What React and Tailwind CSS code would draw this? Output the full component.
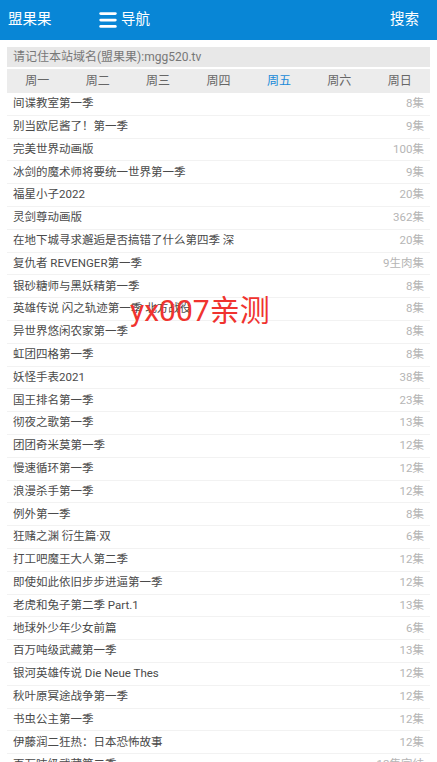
import { Menu } from 'lucide-react';

const days = ['周一', '周二', '周三', '周四', '周五', '周六', '周日'];

const shows = [
  ['间谍教室第一季', '8集'],
  ['别当欧尼酱了！第一季', '9集'],
  ['完美世界动画版', '100集'],
  ['冰剑的魔术师将要统一世界第一季', '9集'],
  ['福星小子2022', '20集'],
  ['灵剑尊动画版', '362集'],
  ['在地下城寻求邂逅是否搞错了什么第四季 深', '20集'],
  ['复仇者 REVENGER第一季', '9生肉集'],
  ['银砂糖师与黑妖精第一季', '8集'],
  ['英雄传说 闪之轨迹第一季 北方战役', '8集'],
  ['异世界悠闲农家第一季', '8集'],
  ['虹团四格第一季', '8集'],
  ['妖怪手表2021', '38集'],
  ['国王排名第一季', '23集'],
  ['彻夜之歌第一季', '13集'],
  ['团团奇米莫第一季', '12集'],
  ['慢速循环第一季', '12集'],
  ['浪漫杀手第一季', '12集'],
  ['例外第一季', '8集'],
  ['狂赌之渊 衍生篇·双', '6集'],
  ['打工吧魔王大人第二季', '12集'],
  ['即使如此依旧步步进逼第一季', '12集'],
  ['老虎和兔子第二季 Part.1', '13集'],
  ['地球外少年少女前篇', '6集'],
  ['百万吨级武藏第一季', '13集'],
  ['银河英雄传说 Die Neue Thes', '12集'],
  ['秋叶原冥途战争第一季', '12集'],
  ['书虫公主第一季', '12集'],
  ['伊藤润二狂热：日本恐怖故事', '12集'],
  ['百万吨级武藏第二季', '12集完结'],
];

export default function App() {
  return (
    <div className="relative min-h-[762px] bg-white font-['Roboto','Noto_Sans_CJK_SC',sans-serif]">
      <header className="flex h-10 items-center bg-[#0886d6] px-2 text-white">
        <span className="w-[89px] text-[14.5px]">盟果果</span>
        <span className="flex items-center gap-[2px] text-[14.5px]">
          <Menu size={22} strokeWidth={3} />
          导航
        </span>
        <span className="ml-auto pr-[10px] text-[14.5px]">搜索</span>
      </header>

      <div className="px-[7px] pt-[7px]">
        <div className="flex h-5 items-center bg-[#e8e8e8] px-[6px] text-[12px] text-[#777]">
          请记住本站域名(盟果果):mgg520.tv
        </div>
        <div className="mt-[2px] grid h-6 grid-cols-7 bg-[#ececec] text-[12px] text-[#666]">
          {days.map((d) => (
            <div key={d} className={`flex items-center justify-center ${d === '周五' ? 'text-[#1a8ad8]' : ''}`}>
              {d}
            </div>
          ))}
        </div>
        <ul>
          {shows.map(([name, eps], i) => (
            <li
              key={i}
              className="flex h-[22.8px] items-center justify-between border-b border-[#f2f2f2] px-[6px] text-[11.5px]"
            >
              <span className="truncate text-[#4a4a4a]">{name}</span>
              <span className="shrink-0 text-[#b5b5b5]">{eps}</span>
            </li>
          ))}
        </ul>
      </div>

      <div className="absolute left-[130px] top-[296px] text-[30px] leading-none text-[#f0332f]">
        yx007亲测
      </div>
    </div>
  );
}
